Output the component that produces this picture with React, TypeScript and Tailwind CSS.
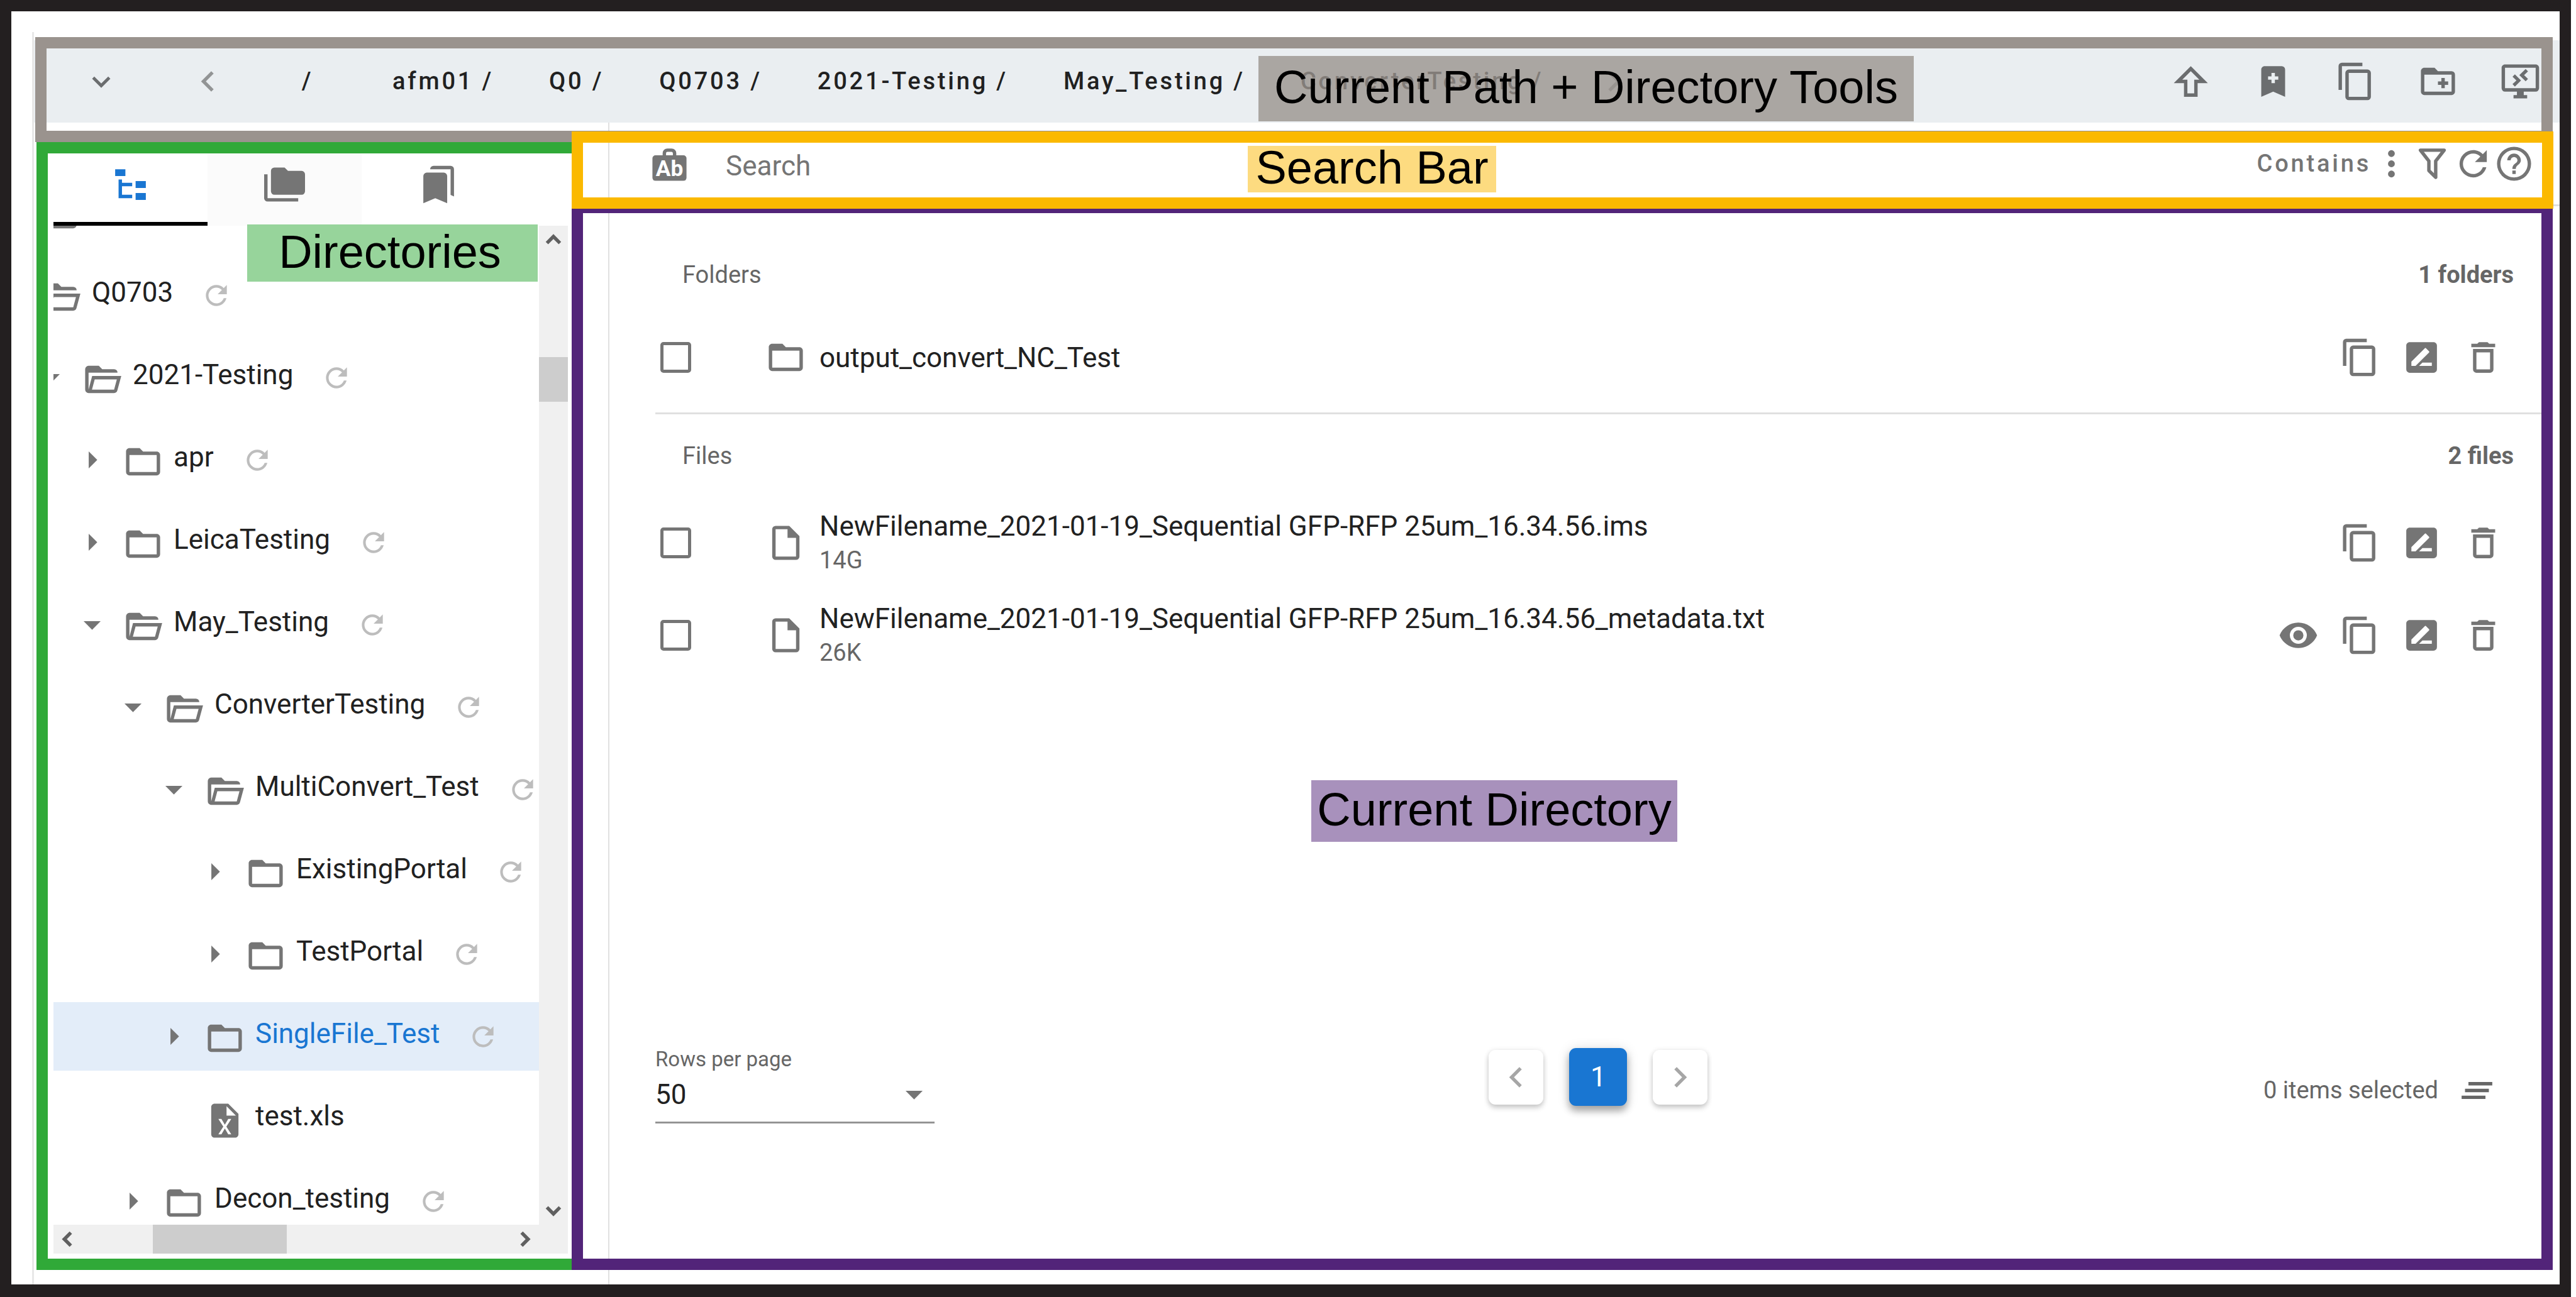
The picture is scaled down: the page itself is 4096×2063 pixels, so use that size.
import type { ReactNode } from "react";

const paths = {
  chevronLeft: "M15.41,16.58L10.83,12L15.41,7.41L14,6L8,12L14,18L15.41,16.58Z",
  chevronRight: "M8.59,16.58L13.17,12L8.59,7.41L10,6L16,12L10,18L8.59,16.58Z",
  chevronDown: "M7.41,8.58L12,13.17L16.59,8.58L18,10L12,16L6,10L7.41,8.58Z",
  chevronUp: "M7.41,15.41L12,10.83L16.59,15.41L18,14L12,8L6,14L7.41,15.41Z",
  arrowUp: "M16,13V21H8V13H2L12,3L22,13H16M7,11H10V19H14V11H17L12,6L7,11Z",
  bookmarkPlus:
    "M17,3A2,2 0 0,1 19,5V21L12,18L5,21V5C5,3.89 5.9,3 7,3H17M11,7V9H9V11H11V13H13V11H15V9H13V7H11Z",
  copy: "M19,21H8V7H19M19,5H8A2,2 0 0,0 6,7V21A2,2 0 0,0 8,23H19A2,2 0 0,0 21,21V7A2,2 0 0,0 19,5M16,1H4A2,2 0 0,0 2,3V17H4V3H16V1Z",
  folderPlus:
    "M12,12H14V10H16V12H18V14H16V16H14V14H12V12M22,8V18A2,2 0 0,1 20,20H4A2,2 0 0,1 2,18V6C2,4.89 2.9,4 4,4H10L12,6H20A2,2 0 0,1 22,8M20,8H4V18H20V8Z",
  remote:
    "M21,16H3V4H21M21,2H3C1.89,2 1,2.89 1,4V16A2,2 0 0,0 3,18H10V20H8V22H16V20H14V18H21A2,2 0 0,0 23,16V4C23,2.89 22.1,2 21,2M7.4,9.2L9.7,11.4L7.4,13.6L8.8,15L12.4,11.4L8.8,7.8L7.4,9.2M15.1,4.7L11.4,8.3L15.1,11.9L16.5,10.5L14.2,8.3L16.5,6.1L15.1,4.7Z",
  tree: "M3,3H9V7H3V3M15,10H21V14H15V10M15,17H21V21H15V17M13,13H7V18H13V20H5V9H7V11H13V13Z",
  folders:
    "M22,4H14L12,2H6A2,2 0 0,0 4,4V16A2,2 0 0,0 6,18H22A2,2 0 0,0 24,16V6A2,2 0 0,0 22,4M2,6H0V20A2,2 0 0,0 2,22H20V20H2V6Z",
  bookmarks:
    "M15,5A2,2 0 0,1 17,7V23L10,20L3,23V7A2,2 0 0,1 5,5H15M9,1H19A2,2 0 0,1 21,3V19L19,18.13V3H7A2,2 0 0,1 9,1Z",
  refresh:
    "M17.65,6.35C16.2,4.9 14.21,4 12,4A8,8 0 0,0 4,12A8,8 0 0,0 12,20C15.73,20 18.84,17.45 19.73,14H17.65C16.83,16.33 14.61,18 12,18A6,6 0 0,1 6,12A6,6 0 0,1 12,6C13.66,6 15.14,6.69 16.22,7.78L13,11H20V4L17.65,6.35Z",
  folder:
    "M20,18H4V8H20M20,6H12L10,4H4C2.89,4 2,4.89 2,6V18A2,2 0 0,0 4,20H20A2,2 0 0,0 22,18V8C22,6.89 21.1,6 20,6Z",
  folderOpen:
    "M6.1,10L4,18V8H21A2,2 0 0,0 19,6H12L10,4H4A2,2 0 0,0 2,6V18A2,2 0 0,0 4,20H19C19.9,20 20.7,19.4 20.9,18.5L23.2,10H6.1M19,18H6L7.6,12H20.6L19,18Z",
  caretRight: "M10,17L15,12L10,7V17Z",
  caretDown: "M7,10L12,15L17,10H7Z",
  file: "M14,2H6A2,2 0 0,0 4,4V20A2,2 0 0,0 6,22H18A2,2 0 0,0 20,20V8L14,2M18,20H6V4H13V9H18V20Z",
  excel:
    "M14 2H6C4.89 2 4 2.9 4 4V20C4 21.11 4.89 22 6 22H18C19.11 22 20 21.11 20 20V8L14 2M15.8 20H14L12 16.6L10 20H8.2L11.1 15.5L8.2 11H10L12 14.4L14 11H15.8L12.9 15.5L15.8 20M13 9V3.5L18.5 9H13Z",
  rename:
    "M18,17H10.5L12.5,15H18M6,17V14.5L13.88,6.65C14.07,6.45 14.39,6.45 14.59,6.65L16.35,8.41C16.55,8.61 16.55,8.92 16.35,9.12L8.47,17M19,3H5C3.89,3 3,3.89 3,5V19A2,2 0 0,0 5,21H19A2,2 0 0,0 21,19V5C21,3.89 20.1,3 19,3Z",
  trash:
    "M6,19A2,2 0 0,0 8,21H16A2,2 0 0,0 18,19V7H6V19M8,9H16V19H8V9M15.5,4L14.5,3H9.5L8.5,4H5V6H19V4H15.5Z",
  eye: "M12,9A3,3 0 0,0 9,12A3,3 0 0,0 12,15A3,3 0 0,0 15,12A3,3 0 0,0 12,9M12,17A5,5 0 0,1 7,12A5,5 0 0,1 12,7A5,5 0 0,1 17,12A5,5 0 0,1 12,17M12,4.5C7,4.5 2.73,7.61 1,12C2.73,16.39 7,19.5 12,19.5C17,19.5 21.27,16.39 23,12C21.27,7.61 17,4.5 12,4.5Z",
  dots: "M12,16A2,2 0 0,1 14,18A2,2 0 0,1 12,20A2,2 0 0,1 10,18A2,2 0 0,1 12,16M12,10A2,2 0 0,1 14,12A2,2 0 0,1 12,14A2,2 0 0,1 10,12A2,2 0 0,1 12,10M12,4A2,2 0 0,1 14,6A2,2 0 0,1 12,8A2,2 0 0,1 10,6A2,2 0 0,1 12,4Z",
  filter:
    "M15,19.88C15.04,20.18 14.94,20.5 14.71,20.71C14.32,21.1 13.69,21.1 13.3,20.71L9.29,16.7C9.06,16.47 8.96,16.16 9,15.87V10.75L4.21,4.62C3.87,4.19 3.95,3.56 4.38,3.22C4.57,3.08 4.78,3 5,3H19C19.22,3 19.43,3.08 19.62,3.22C20.05,3.56 20.13,4.19 19.79,4.62L15,10.75V19.88M7.04,5L11,10.06V15.58L13,17.58V10.05L16.96,5H7.04Z",
  help: "M11,18H13V16H11V18M12,2A10,10 0 0,0 2,12A10,10 0 0,0 12,22A10,10 0 0,0 22,12A10,10 0 0,0 12,2M12,20C7.59,20 4,16.41 4,12C4,7.59 7.59,4 12,4C16.41,4 20,7.59 20,12C20,16.41 16.41,20 12,20M12,6A4,4 0 0,0 8,10H10A2,2 0 0,1 12,8A2,2 0 0,1 14,10C14,12 11,11.75 11,15H13C13,12.75 16,12.5 16,10A4,4 0 0,0 12,6Z",
  clearAll: "M5,13H19V11H5V13M3,17H17V15H3V17M7,7V9H21V7H7Z",
};

type IconName = keyof typeof paths;

function Icon({ name, className = "size-[65px]" }: { name: IconName; className?: string }) {
  return (
    <svg viewBox="0 0 24 24" aria-hidden="true" fill="currentColor" className={`block shrink-0 ${className}`}>
      <path fillRule="evenodd" d={paths[name]} />
    </svg>
  );
}

function IconButton({ name, label, className }: { name: IconName; label: string; className?: string }) {
  return (
    <button type="button" aria-label={label} className="shrink-0">
      <Icon name={name} className={className} />
    </button>
  );
}

const crumbs = ["afm01", "Q0", "Q0703", "2021-Testing", "May_Testing", "ConverterTesting"];

function PathBar() {
  return (
    <header className="mt-[13px] flex h-[131px] shrink-0 items-center bg-[#eaeef1] pr-[30px] pl-[32px] text-[38px] font-medium text-[#212121]">
      <button type="button" aria-label="Path history" className="flex w-[150px] shrink-0 justify-center text-[#6b6d6f]">
        <Icon name="chevronDown" className="size-[58px]" />
      </button>
      <button type="button" aria-label="Back" className="flex w-[188px] shrink-0 justify-center text-[#929495]">
        <Icon name="chevronLeft" />
      </button>
      <nav aria-label="Current path" className="flex flex-1 items-center tracking-widest">
        <a href="#root" className="mr-[26px] w-[130px] text-center">
          /
        </a>
        {crumbs.map((crumb) => (
          <a key={crumb} href={`#${crumb}`} className="px-11 whitespace-nowrap">
            {crumb} /
          </a>
        ))}
        <button type="button" aria-label="Forward" className="ml-[36px] text-[#929495]">
          <Icon name="chevronRight" />
        </button>
      </nav>
      <div className="flex gap-[66px] text-[#6b6d6f]">
        <IconButton name="arrowUp" label="Up one directory" />
        <IconButton name="bookmarkPlus" label="Add bookmark" />
        <IconButton name="copy" label="Copy path" />
        <IconButton name="folderPlus" label="New folder" />
        <IconButton name="remote" label="Remote desktop" />
      </div>
    </header>
  );
}

type Node = {
  name: string;
  level: number;
  kind: "open" | "closed" | "file";
  selected?: boolean;
};

const nodes: Node[] = [
  { name: "", level: 0, kind: "open" },
  { name: "Q0703", level: 0, kind: "open" },
  { name: "2021-Testing", level: 1, kind: "open" },
  { name: "apr", level: 2, kind: "closed" },
  { name: "LeicaTesting", level: 2, kind: "closed" },
  { name: "May_Testing", level: 2, kind: "open" },
  { name: "ConverterTesting", level: 3, kind: "open" },
  { name: "MultiConvert_Test", level: 4, kind: "open" },
  { name: "ExistingPortal", level: 5, kind: "closed" },
  { name: "TestPortal", level: 5, kind: "closed" },
  { name: "SingleFile_Test", level: 4, kind: "closed", selected: true },
  { name: "test.xls", level: 4, kind: "file" },
  { name: "Decon_testing", level: 3, kind: "closed" },
];

const nodeIcon: Record<Node["kind"], IconName> = { open: "folderOpen", closed: "folder", file: "excel" };

function TreeRow({ node }: { node: Node }) {
  const isFile = node.kind === "file";
  return (
    <li
      className={`mb-[22px] flex h-[109px] items-center gap-4 text-[#757575] ${node.selected ? "bg-[#e3edf9]" : ""}`}
      style={{ paddingLeft: node.level * 65 }}
    >
      <span className="size-[65px] shrink-0">
        {!isFile && <Icon name={node.kind === "open" ? "caretDown" : "caretRight"} />}
      </span>
      <span className="pt-[6px]">
        <Icon name={nodeIcon[node.kind]} />
      </span>
      {node.name && (
        <>
          <a
            href={`#${node.name}`}
            className={`pb-[10px] text-[44px] whitespace-nowrap ${node.selected ? "text-[#1976d2]" : "text-[#212121]"}`}
          >
            {node.name}
          </a>
          {!isFile && (
            <button type="button" aria-label={`Refresh ${node.name}`} className="ml-[28px] shrink-0 text-[#bdbdbd]">
              <Icon name="refresh" className="size-[50px]" />
            </button>
          )}
        </>
      )}
    </li>
  );
}

function Sidebar() {
  return (
    <aside className="flex w-[915px] shrink-0 flex-col border-r-2 border-[#e0e0e0] pt-[33px] pr-[64px] pb-[49px] pl-[31px]">
      <div role="tablist" aria-label="Directory views" className="flex h-[131px] shrink-0">
        <button
          type="button"
          role="tab"
          aria-selected="true"
          aria-label="Tree"
          className="flex w-[245px] items-center justify-center border-b-[6px] border-black pt-[6px] text-[#1976d2]"
        >
          <Icon name="tree" />
        </button>
        <button
          type="button"
          role="tab"
          aria-selected="false"
          aria-label="Root folders"
          className="flex w-[245px] items-center justify-center bg-[#fbfbfb] text-[#757575]"
        >
          <Icon name="folders" />
        </button>
        <button
          type="button"
          role="tab"
          aria-selected="false"
          aria-label="Bookmarks"
          className="flex w-[245px] items-center justify-center text-[#757575]"
        >
          <Icon name="bookmarks" />
        </button>
      </div>
      <div className="flex min-h-0 flex-1">
        <div className="min-w-0 flex-1 overflow-hidden">
          <ul className="-mt-[75px] -ml-[101px]">
            {nodes.map((node) => (
              <TreeRow key={node.name} node={node} />
            ))}
          </ul>
        </div>
        <div className="flex w-[46px] shrink-0 flex-col items-center bg-[#f0f0f0] text-[#606060]">
          <Icon name="chevronUp" className="size-[44px] stroke-current stroke-1" />
          <div className="mt-[165px] h-[71px] w-full bg-[#cdcdcd]" />
          <Icon name="chevronDown" className="mt-auto size-[44px] stroke-current stroke-1" />
        </div>
      </div>
      <div className="flex h-[46px] shrink-0 items-center bg-[#f0f0f0] pr-[46px] text-[#606060]">
        <Icon name="chevronLeft" className="size-[44px] stroke-current stroke-1" />
        <div className="ml-[114px] h-full w-[213px] bg-[#cdcdcd]" />
        <Icon name="chevronRight" className="ml-auto size-[44px] stroke-current stroke-1" />
      </div>
    </aside>
  );
}

function SearchRow() {
  return (
    <div className="flex h-[133px] shrink-0 items-center border-b-[3px] border-[#e0e0e0] pr-[40px] pl-[63px] text-[#757575]">
      <svg viewBox="0 0 24 24" aria-hidden="true" className="block size-[65px] shrink-0">
        <path d="M9 8V5.8A1.8 1.8 0 0 1 10.8 4H13.2A1.8 1.8 0 0 1 15 5.8V8" fill="none" stroke="currentColor" strokeWidth="2" />
        <rect x="2" y="7" width="20" height="15" rx="1.8" fill="currentColor" />
        <text x="12" y="19.2" textAnchor="middle" fontFamily="Roboto, sans-serif" fontSize="13" fontWeight="700" fill="#fff">
          Ab
        </text>
      </svg>
      <input
        type="text"
        aria-label="Search"
        placeholder="Search"
        className="ml-[57px] h-[80px] min-w-0 flex-1 bg-transparent pt-2 text-[44px] text-[#212121] outline-none placeholder:text-[#757575]"
      />
      <button type="button" className="text-[38px] font-medium tracking-widest">
        Contains
      </button>
      <IconButton name="dots" label="Search options" />
      <IconButton name="filter" label="Filter" />
      <IconButton name="refresh" label="Refresh" />
      <IconButton name="help" label="Help" />
    </div>
  );
}

function SectionHeader({ title, count }: { title: string; count: string }) {
  return (
    <div className="flex h-[131px] items-center justify-between pt-[2px] pr-[44px] pl-[43px] text-[38px] text-[#666666]">
      <h2>{title}</h2>
      <span className="font-bold">{count}</span>
    </div>
  );
}

function EntryRow({
  name,
  size,
  icon,
  viewable,
  className,
}: {
  name: string;
  size?: string;
  icon: IconName;
  viewable?: boolean;
  className: string;
}) {
  return (
    <li className={`flex items-center pr-[60px] pl-2 text-[#757575] ${className}`}>
      <input
        type="checkbox"
        aria-label={`Select ${name}`}
        className="size-[49px] shrink-0 appearance-none rounded-[5px] border-[5px] border-[#757575]"
      />
      <Icon name={icon} className="ml-[118px] size-[65px]" />
      <div className="ml-[21px] min-w-0 flex-1">
        <div className="text-[44px] leading-[54px] text-[#212121]">{name}</div>
        {size && <div className="text-[38px] leading-[54px] text-[#666666]">{size}</div>}
      </div>
      <div className="flex gap-[33px]">
        {viewable && <IconButton name="eye" label={`View ${name}`} />}
        <IconButton name="copy" label={`Copy ${name}`} />
        <IconButton name="rename" label={`Rename ${name}`} />
        <IconButton name="trash" label={`Delete ${name}`} />
      </div>
    </li>
  );
}

function Footer() {
  return (
    <footer className="mt-auto grid grid-cols-3 items-end">
      <div className="w-[444px] border-b-[3px] border-[#949494]">
        <label htmlFor="rows" className="block text-[33px] leading-[38px] text-[#666666]">
          Rows per page
        </label>
        <div className="relative flex items-center">
          <select
            id="rows"
            defaultValue="50"
            className="h-[80px] w-full appearance-none bg-transparent pb-[6px] text-[44px] text-[#212121]"
          >
            <option value="50">50</option>
          </select>
          <Icon name="caretDown" className="pointer-events-none absolute right-0 mb-2 size-[65px] text-[#757575]" />
        </div>
      </div>
      <nav aria-label="Pagination" className="mb-[28px] flex items-center justify-center gap-[41px]">
        <button
          type="button"
          aria-label="Previous page"
          className="flex size-[87px] items-center justify-center rounded-[11px] bg-white text-[#a6a6a6] shadow-[0_5px_8px_rgba(0,0,0,0.2),0_0_8px_rgba(0,0,0,0.08)]"
        >
          <Icon name="chevronLeft" />
        </button>
        <button
          type="button"
          aria-current="page"
          className="flex size-[92px] items-center justify-center rounded-[11px] bg-[#1976d2] text-[44px] text-white shadow-[0_8px_12px_rgba(0,0,0,0.3),0_2px_20px_rgba(0,0,0,0.14)]"
        >
          1
        </button>
        <button
          type="button"
          aria-label="Next page"
          className="flex size-[87px] items-center justify-center rounded-[11px] bg-white text-[#a6a6a6] shadow-[0_5px_8px_rgba(0,0,0,0.2),0_0_8px_rgba(0,0,0,0.08)]"
        >
          <Icon name="chevronRight" />
        </button>
      </nav>
      <div className="mb-[20px] flex items-center justify-end gap-[29px] pr-[70px] text-[38px] text-[#666666]">
        <span>0 items selected</span>
        <IconButton name="clearAll" label="Clear selection" />
      </div>
    </footer>
  );
}

function Tag({ className, children }: { className: string; children: ReactNode }) {
  return (
    <div
      className={`absolute flex items-center justify-center pb-1 font-['Liberation_Sans',sans-serif] text-[74px] leading-none whitespace-nowrap text-black ${className}`}
    >
      {children}
    </div>
  );
}

/* Coloured frames and captions that lie over the application. */
function Annotations() {
  return (
    <div className="pointer-events-none absolute inset-0">
      <div className="absolute top-[41px] right-[11px] left-[38px] h-[167px] border-[18px] border-[#9a938e]" />
      <div className="absolute top-[208px] bottom-[23px] left-[40px] w-[869px] border-[18px] border-[#30a938]" />
      <div className="absolute top-[303px] right-[11px] bottom-[23px] left-[891px] border-[18px] border-[#522479]" />
      <div className="absolute top-[191px] right-[10px] left-[891px] h-[123px] border-[18px] border-[#fbb900]" />
      <Tag className="top-[71px] left-[1983px] h-[104px] w-[1042px] bg-[#9a938e]/80">
        Current Path + Directory Tools
      </Tag>
      <Tag className="top-[214px] left-[1966px] h-[74px] w-[395px] bg-[#fddb80]">Search Bar</Tag>
      <Tag className="top-[339px] left-[375px] h-[91px] w-[462px] bg-[#97d49b] pr-2">Directories</Tag>
      <Tag className="top-[1223px] left-[2067px] h-[98px] w-[582px] bg-[#a891bc]">Current Directory</Tag>
    </div>
  );
}

export default function App() {
  return (
    <div className="h-screen bg-white pr-2 font-[Roboto,sans-serif]">
      <div className="relative h-full border-[18px] border-b-[20px] border-[#231f20] pt-[33px] pl-[33px]">
        <div className="flex h-full flex-col border-l-[3px] border-[#e8e8e8]">
          <PathBar />
          <div className="flex min-h-0 flex-1">
            <Sidebar />
            <main className="flex min-w-0 flex-1 flex-col">
              <SearchRow />
              <div className="mr-[29px] ml-[73px] flex flex-1 flex-col pt-[43px] pb-[256px]">
                <section className="border-b-[3px] border-[#e0e0e0] pb-[21px]">
                  <SectionHeader title="Folders" count="1 folders" />
                  <ul>
                    <EntryRow name="output_convert_NC_Test" icon="folder" className="h-[133px]" />
                  </ul>
                </section>
                <section>
                  <SectionHeader title="Files" count="2 files" />
                  <ul>
                    <EntryRow
                      name="NewFilename_2021-01-19_Sequential GFP-RFP 25um_16.34.56.ims"
                      size="14G"
                      icon="file"
                      className="h-[147px]"
                    />
                    <EntryRow
                      name="NewFilename_2021-01-19_Sequential GFP-RFP 25um_16.34.56_metadata.txt"
                      size="26K"
                      icon="file"
                      viewable
                      className="h-[147px]"
                    />
                  </ul>
                </section>
                <Footer />
              </div>
            </main>
          </div>
        </div>
        <Annotations />
      </div>
    </div>
  );
}
